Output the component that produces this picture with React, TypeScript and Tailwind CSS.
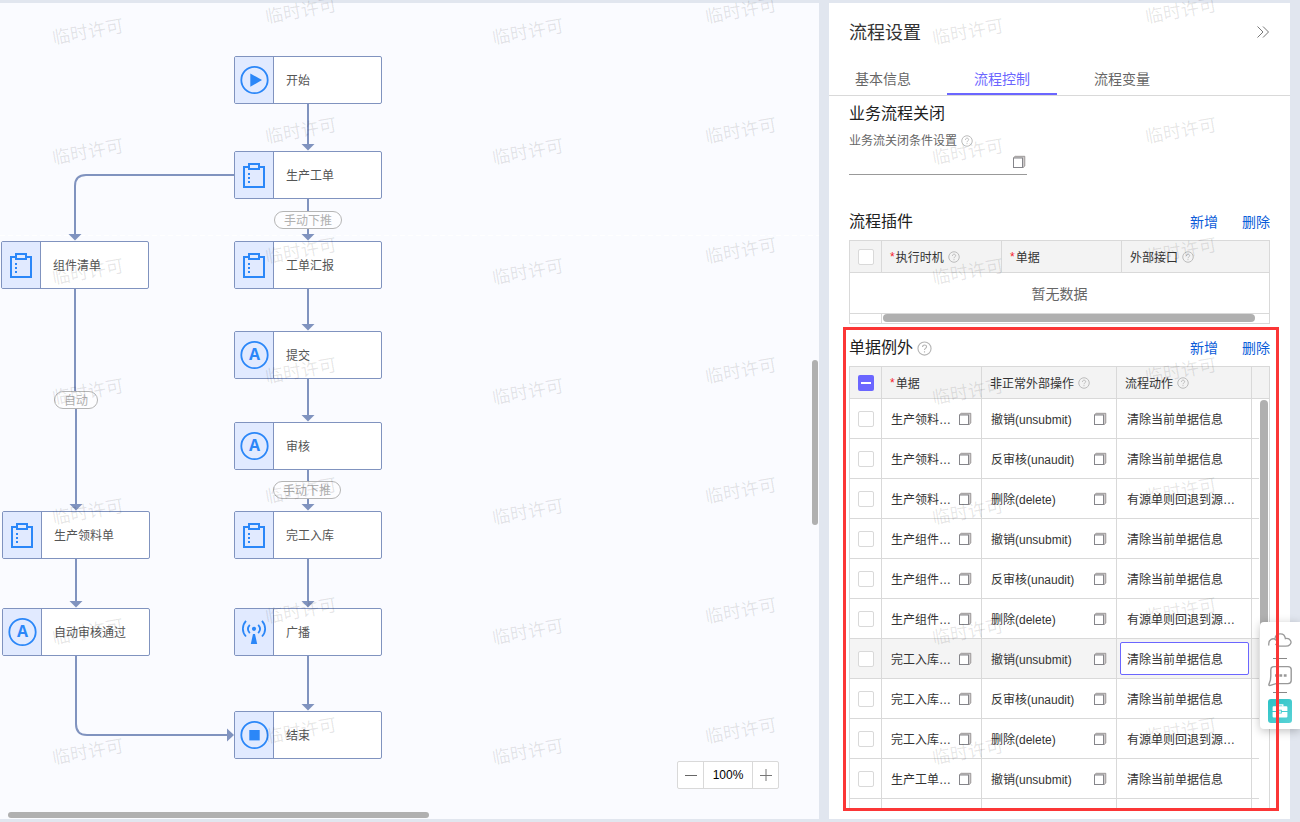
import { ReactNode } from "react";

type IconKind = "start" | "stop" | "bill" | "auto" | "broadcast";

interface FlowNode {
  label: string;
  kind: IconKind;
  x: number;
  y: number;
}

const nodes: FlowNode[] = [
  { label: "开始", kind: "start", x: 234, y: 53 },
  { label: "生产工单", kind: "bill", x: 234, y: 148 },
  { label: "组件清单", kind: "bill", x: 1, y: 238 },
  { label: "工单汇报", kind: "bill", x: 234, y: 238 },
  { label: "提交", kind: "auto", x: 234, y: 328 },
  { label: "审核", kind: "auto", x: 234, y: 419 },
  { label: "生产领料单", kind: "bill", x: 2, y: 508 },
  { label: "完工入库", kind: "bill", x: 234, y: 508 },
  { label: "自动审核通过", kind: "auto", x: 2, y: 605 },
  { label: "广播", kind: "broadcast", x: 234, y: 605 },
  { label: "结束", kind: "stop", x: 234, y: 708 },
];

const tags = [
  { label: "手动下推", x: 274, y: 208 },
  { label: "自动", x: 54, y: 388 },
  { label: "手动下推", x: 273, y: 478 },
];

const lines = [
  "M308 101V143",
  "M308 196V233",
  "M308 286V323",
  "M308 376V414",
  "M308 467V503",
  "M308 556V600",
  "M308 653V703",
  "M234 172H86Q75 172 75 183V233",
  "M75 286V397H76V503",
  "M76 556V600",
  "M76 653V721Q76 732 87 732H229",
];

const arrows = [
  [308, 148],
  [308, 238],
  [308, 328],
  [308, 419],
  [308, 508],
  [308, 605],
  [308, 708],
  [75, 238],
  [76, 508],
  [76, 605],
];

const rows = [
  ["生产领料…", "撤销(unsubmit)", "清除当前单据信息"],
  ["生产领料…", "反审核(unaudit)", "清除当前单据信息"],
  ["生产领料…", "删除(delete)", "有源单则回退到源…"],
  ["生产组件…", "撤销(unsubmit)", "清除当前单据信息"],
  ["生产组件…", "反审核(unaudit)", "清除当前单据信息"],
  ["生产组件…", "删除(delete)", "有源单则回退到源…"],
  ["完工入库…", "撤销(unsubmit)", "清除当前单据信息"],
  ["完工入库…", "反审核(unaudit)", "清除当前单据信息"],
  ["完工入库…", "删除(delete)", "有源单则回退到源…"],
  ["生产工单…", "撤销(unsubmit)", "清除当前单据信息"],
  ["", "", ""],
];
const selectedRow = 6;

function NodeIcon({ kind }: { kind: IconKind }) {
  return (
    <svg viewBox="1 1 38 46" className="h-[46px] w-[38px] shrink-0" fill="none" stroke="#2b87f8" strokeWidth="2" aria-hidden="true">
      {kind === "bill" && (
        <>
          <path d="M14 16H10V36H30V16H26" />
          <rect x="15" y="13" width="10" height="5" />
          <path d="M15 22v2M15 26v2M15 30v2" />
        </>
      )}
      {(kind === "start" || kind === "stop" || kind === "auto") && <circle cx="20.5" cy="24" r="13.2" strokeWidth="1.8" />}
      {kind === "start" && <path d="M16.3 17.5L28 24L16.3 30.8Z" fill="#2b87f8" stroke="none" />}
      {kind === "stop" && <rect x="15.3" y="19" width="10.4" height="10.4" fill="#2b87f8" stroke="none" />}
      {kind === "auto" && (
        <text x="20.5" y="29" textAnchor="middle" fill="#2b87f8" stroke="none" className="font-['Open_Sans',sans-serif] text-[16px] font-bold">
          A
        </text>
      )}
      {kind === "broadcast" && (
        <>
          <path d="M12 12.8C7.8 17.5 7.8 24 12 28.5M28 12.8C32.2 17.5 32.2 24 28 28.5" strokeWidth="1.8" />
          <path d="M15.8 16.8C13.4 19.5 13.4 22.5 15.8 25.2M24.2 16.8C26.6 19.5 26.6 22.5 24.2 25.2" strokeWidth="1.8" />
          <circle cx="20" cy="20.8" r="2.1" fill="#2b87f8" stroke="none" />
          <path d="M19 26H21L23.2 36H16.8Z" fill="#2b87f8" stroke="none" />
        </>
      )}
    </svg>
  );
}

function HelpIcon({ large = false }: { large?: boolean }) {
  return (
    <svg viewBox="0 0 16 16" className={large ? "size-[15px] shrink-0" : "size-[12px] shrink-0"} fill="none" stroke="#b5b5b5" strokeWidth="1.2" aria-hidden="true">
      <circle cx="8" cy="8" r="7" />
      <path d="M5.9 6.5C5.9 3.5 10.2 3.6 10.2 6.2C10.2 7.9 8 7.9 8 9.6M8 10.9V12.2" />
    </svg>
  );
}

function PickIcon() {
  return (
    <svg viewBox="0 0 14 14" className="size-[14px] shrink-0" fill="none" aria-hidden="true">
      <path d="M1 3L3 1H13V11L11 13V3Z" fill="#cfcccc" />
      <rect x="1.5" y="3" width="9" height="9.5" fill="#fff" stroke="#85858a" />
      <path d="M1.5 2.8L3.2 1.3H12.8V11L11 12.7" stroke="#9a9696" strokeWidth="0.9" />
    </svg>
  );
}

function Check({ label }: { label: string }) {
  return (
    <input
      type="checkbox"
      aria-label={label}
      className="block size-4 appearance-none rounded-[2px] border border-[#d9d9d9] bg-white"
    />
  );
}

function SectionHeader({ title, children }: { title: string; children?: ReactNode }) {
  return (
    <div className="flex h-9 shrink-0 items-center">
      <h2 className="text-base text-[#212121]">{title}</h2>
      {children}
      <div className="ml-auto flex gap-6 text-sm text-[#0b5cd9]">
        <button type="button">新增</button>
        <button type="button">删除</button>
      </div>
    </div>
  );
}

function Head({ children, required = false, help = false }: { children: ReactNode; required?: boolean; help?: boolean }) {
  return (
    <th className="h-8 border-r border-b border-[#d9d9d9] pl-2 text-left font-normal last:border-r-0">
      <div className="flex items-center">
        {required && <span className="mr-px text-[#f5222d]">*</span>}
        <span className="mr-1 pt-0.5">{children}</span>
        {help && <HelpIcon />}
      </div>
    </th>
  );
}

function Watermarks() {
  const marks: number[][] = [];
  for (let r = 0; r < 7; r++) {
    [52, 492, 932].forEach((x) => marks.push([x, 20 + r * 120]));
    [265, 705, 1145].forEach((x) => marks.push([x, r * 120 - 1]));
  }
  return (
    <div className="pointer-events-none absolute inset-0 z-10 overflow-hidden" aria-hidden="true">
      {marks.map(([x, y]) => (
        <span key={`${x}-${y}`} className="absolute -rotate-10 text-lg leading-6 whitespace-nowrap text-black/10" style={{ left: x, top: y }}>
          临时许可
        </span>
      ))}
    </div>
  );
}

function Canvas() {
  return (
    <main className="relative min-w-0 flex-1 overflow-hidden bg-[#fafbff]">
      <svg className="absolute inset-0 h-full w-full" fill="none" aria-hidden="true">
        <path d="M0 232.5H819" stroke="#fff" strokeDasharray="5 3" />
        {lines.map((d) => (
          <path key={d} d={d} stroke="#8093bf" strokeWidth="2" />
        ))}
        {arrows.map(([x, y]) => (
          <path key={`${x}-${y}`} d={`M${x - 6.5} ${y - 7}h13l-6.5 6.5Z`} fill="#8093bf" />
        ))}
        <path d="M227 725.5v13l7 -6.5Z" fill="#8093bf" />
      </svg>
      {nodes.map((n) => (
        <div
          key={n.label}
          className="absolute flex h-12 w-[148px] items-center overflow-hidden rounded-[2px] border border-[#8093bf] bg-white text-xs text-[#555]"
          style={{ left: n.x, top: n.y }}
        >
          <div className="flex h-full w-[39px] shrink-0 border-r border-[#8093bf] bg-[#e1eaff]">
            <NodeIcon kind={n.kind} />
          </div>
          <span className="ml-3 pt-0.5">{n.label}</span>
        </div>
      ))}
      {tags.map((t) => (
        <span
          key={t.y}
          className="absolute flex h-[18px] items-center rounded-full border border-[#b5b5b5] bg-[#fdfdff] px-[9px] pt-0.5 text-xs text-[#b0b0b0]"
          style={{ left: t.x, top: t.y }}
        >
          {t.label}
        </span>
      ))}
      <div className="absolute right-10 bottom-[30px] flex h-7 rounded-[2px] border border-[#d9d9d9] bg-white text-xs text-black">
        <button type="button" aria-label="缩小" className="flex w-[26px] items-center justify-center border-r border-[#d9d9d9]">
          <svg viewBox="0 0 12 12" className="size-3" stroke="#666" aria-hidden="true">
            <path d="M0 6.5H12" />
          </svg>
        </button>
        <span className="flex w-12 items-center justify-center">100%</span>
        <button type="button" aria-label="放大" className="flex w-[26px] items-center justify-center border-l border-[#d9d9d9]">
          <svg viewBox="0 0 12 12" className="size-3" stroke="#777" aria-hidden="true">
            <path d="M0 6.5H12M6 0V12" />
          </svg>
        </button>
      </div>
      <div className="absolute top-[357px] right-px h-[165px] w-1.5 rounded-full bg-[#b0b0b0]" />
      <div className="absolute bottom-px left-2 h-1.5 w-[421px] rounded-full bg-[#b0b0b0]" />
    </main>
  );
}

function PluginTable() {
  return (
    <div className="shrink-0 border border-[#d9d9d9] text-xs text-[#333]">
      <table className="w-full table-fixed border-separate border-spacing-0">
        <colgroup>
          <col className="w-8" />
          <col className="w-[120px]" />
          <col className="w-[120px]" />
          <col />
        </colgroup>
        <thead className="bg-[#f3f3f3]">
          <tr>
            <th className="h-8 border-r border-b border-[#d9d9d9] pl-2">
              <Check label="全选插件" />
            </th>
            <Head required help>执行时机</Head>
            <Head required>单据</Head>
            <Head help>外部接口</Head>
          </tr>
        </thead>
        <tbody>
          <tr>
            <td colSpan={4} className="h-[41px] border-b border-[#d9d9d9] pt-0.5 text-center text-sm text-[#666]">
              暂无数据
            </td>
          </tr>
        </tbody>
      </table>
      <div className="flex h-[9px]">
        <div className="w-8 border-r border-[#d9d9d9]" />
        <div className="mr-3.5 ml-px h-2 flex-1 rounded-full bg-[#b0b0b0]" />
      </div>
    </div>
  );
}

function ExceptionTable() {
  return (
    <div className="relative min-h-0 flex-1 overflow-hidden border border-b-0 border-[#d9d9d9] text-xs text-[#333]">
      <table className="w-full table-fixed border-separate border-spacing-0">
        <colgroup>
          <col className="w-8" />
          <col className="w-[100px]" />
          <col className="w-[135px]" />
          <col className="w-[135px]" />
          <col />
        </colgroup>
        <thead className="bg-[#f3f3f3]">
          <tr>
            <th className="h-8 border-r border-b border-[#d9d9d9] pl-2">
              <span className="relative block size-4">
                <input
                  type="checkbox"
                  aria-label="全选单据"
                  ref={(el) => {
                    if (el) el.indeterminate = true;
                  }}
                  className="block size-4 appearance-none rounded-[2px] bg-[#6b66ff]"
                />
                <span className="pointer-events-none absolute top-[7px] left-[3px] h-0.5 w-2.5 bg-white" />
              </span>
            </th>
            <Head required>单据</Head>
            <Head help>非正常外部操作</Head>
            <Head help>流程动作</Head>
            <th className="border-b border-[#d9d9d9]" />
          </tr>
        </thead>
        <tbody>
          {rows.map(([bill, op, action], i) => (
            <tr key={i} className={i === selectedRow ? "bg-[#f4f4f4]" : ""}>
              <td className="h-10 border-r border-b border-[#d9d9d9] pl-2">
                <Check label={`第${i + 1}行`} />
              </td>
              {[bill, op].map((text, c) => (
                <td key={c} className="border-r border-b border-[#d9d9d9] px-[9px]">
                  <div className="flex items-center justify-between">
                    <span className="pt-0.5 whitespace-nowrap">{text}</span>
                    <button type="button" aria-label="选择">
                      <PickIcon />
                    </button>
                  </div>
                </td>
              ))}
              <td className="border-r border-b border-[#d9d9d9] pr-0.5 pl-[3px]">
                <input
                  readOnly
                  aria-label="流程动作"
                  value={action}
                  className={
                    i === selectedRow
                      ? "block h-[33px] w-full rounded-[2px] border border-[#6b66ff] bg-white px-1.5 outline-none"
                      : "block h-[33px] w-full border border-transparent px-1.5 outline-none"
                  }
                />
              </td>
              <td className="border-b border-[#d9d9d9]" />
            </tr>
          ))}
        </tbody>
      </table>
      <div className="absolute top-8 right-0 bottom-0 w-2.5 bg-white px-px pt-px">
        <div className="h-[300px] rounded-full bg-[#b0b0b0]" />
      </div>
    </div>
  );
}

function SettingsPanel() {
  return (
    <aside className="flex w-[461px] shrink-0 flex-col bg-white pb-[11px]">
      <header className="flex h-[58px] shrink-0 items-center justify-between px-5">
        <h1 className="pt-0.5 text-lg text-[#333]">流程设置</h1>
        <button type="button" aria-label="收起">
          <svg viewBox="0 0 14 12" className="h-3 w-3.5" fill="none" stroke="#777" aria-hidden="true">
            <path d="M1.5 0.5L7 6L1.5 11.5M7 0.5L12.5 6L7 11.5" />
          </svg>
        </button>
      </header>
      <nav className="flex h-[35px] shrink-0 gap-2.5 border-b border-[#d9d9d9] text-sm text-[#666]">
        <button type="button" className="w-[108px] border-b-2 border-transparent pt-[3px]">基本信息</button>
        <button type="button" className="w-[110px] border-b-2 border-[#6b66ff] pt-[3px] text-[#6b66ff]">流程控制</button>
        <button type="button" className="w-[110px] border-b-2 border-transparent pt-[3px]">流程变量</button>
      </nav>
      <div className="flex min-h-0 flex-1 flex-col px-5">
        <h2 className="flex h-9 shrink-0 items-center text-base text-[#212121]">业务流程关闭</h2>
        <label htmlFor="close-rule" className="flex h-[18px] shrink-0 items-center gap-1 text-xs text-[#666]">
          业务流关闭条件设置
          <HelpIcon />
        </label>
        <div className="flex h-[25px] w-[178px] shrink-0 items-center border-b border-[#999]">
          <input id="close-rule" className="min-w-0 flex-1 text-xs outline-none" />
          <button type="button" aria-label="选择条件" className="mr-px">
            <PickIcon />
          </button>
        </div>
        <section className="mt-[29px] shrink-0">
          <SectionHeader title="流程插件" />
          <PluginTable />
        </section>
        <section className="relative mt-1.5 flex min-h-0 flex-1 flex-col">
          <SectionHeader title="单据例外">
            <span className="ml-1">
              <HelpIcon large />
            </span>
          </SectionHeader>
          <ExceptionTable />
          <div className="pointer-events-none absolute -top-[3px] -right-[9px] -bottom-[3px] -left-1.5 z-30 border-3 border-[#fb3636]" />
        </section>
      </div>
    </aside>
  );
}

function FloatingTools() {
  return (
    <div className="absolute top-[622px] right-0 z-20 flex h-[107px] w-10 flex-col items-center rounded-l-[4px] bg-white pt-[9px] shadow-[0_2px_10px_rgba(0,0,0,0.25)]">
      <button type="button" aria-label="云服务">
        <svg viewBox="0 0 24 18" className="block h-[18px] w-6" fill="none" stroke="#999" strokeWidth="1.3" strokeLinecap="round" aria-hidden="true">
          <path d="M0.8 14C0.2 8.5 5 6 8.2 9.2L10.4 11.2M7 7.8C7.4 1.6 16.5 0.8 17.4 7.6C22 6.6 24.6 11.2 21.8 13.8C20.8 14.9 19.4 15.2 17.8 15.2H11.5C9.8 15.2 8.6 14.6 7.8 13.4" />
        </svg>
      </button>
      <span className="mt-[9px] h-px w-3.5 shrink-0 bg-[#888]" />
      <button type="button" aria-label="消息" className="mt-[6px]">
        <svg viewBox="0 0 24 22" className="block h-[22px] w-6" fill="none" stroke="#999" strokeWidth="1.4" aria-hidden="true">
          <path d="M2.8 5C2.8 2.6 4 1.6 6 1.6H20C22.3 1.6 23.2 2.6 23.2 4.6V15.6C23.2 17.6 22.3 18.6 20 18.6H8L2.4 20.4C0.8 20.8 0.5 20 1.2 18.6C2.4 16.2 2.8 14 2.8 11Z" />
          <path d="M7 10.5h2.8M11.4 10.5h2.8M15.8 10.5h2.8" strokeWidth="2.6" />
        </svg>
      </button>
      <span className="mt-[5px] h-px w-3.5 shrink-0 bg-[#888]" />
      <button type="button" aria-label="工具箱" className="mt-[6px]">
        <svg viewBox="0 0 24 24" className="block size-6" aria-hidden="true">
          <defs>
            <linearGradient id="toolbox" x1="0" y1="0" x2="1" y2="1">
              <stop offset="0" stopColor="#2bc2c6" />
              <stop offset="1" stopColor="#5ad3d6" />
            </linearGradient>
          </defs>
          <rect width="24" height="24" rx="3" fill="url(#toolbox)" />
          <path d="M9.2 7.5V5.8H14.8V7.5" fill="none" stroke="#fff" strokeWidth="1.3" />
          <path d="M5.6 7.3H18.4Q19.4 7.3 19.4 8.3V12H13.8V10.8H10.2V12H4.6V8.3Q4.6 7.3 5.6 7.3Z" fill="#fff" />
          <path d="M4.6 13H10.2V14.6H13.8V13H19.4V17.4Q19.4 18.4 18.4 18.4H5.6Q4.6 18.4 4.6 17.4Z" fill="#fff" />
          <rect x="11.2" y="11.6" width="1.6" height="2.2" fill="#fff" />
        </svg>
      </button>
    </div>
  );
}

export default function App() {
  return (
    <div className="relative flex h-screen gap-2.5 overflow-hidden bg-[#e1e6ef] py-[3px] pr-2.5 font-['Liberation_Sans','Noto_Sans_CJK_SC',sans-serif]">
      <Canvas />
      <SettingsPanel />
      <Watermarks />
      <FloatingTools />
    </div>
  );
}
